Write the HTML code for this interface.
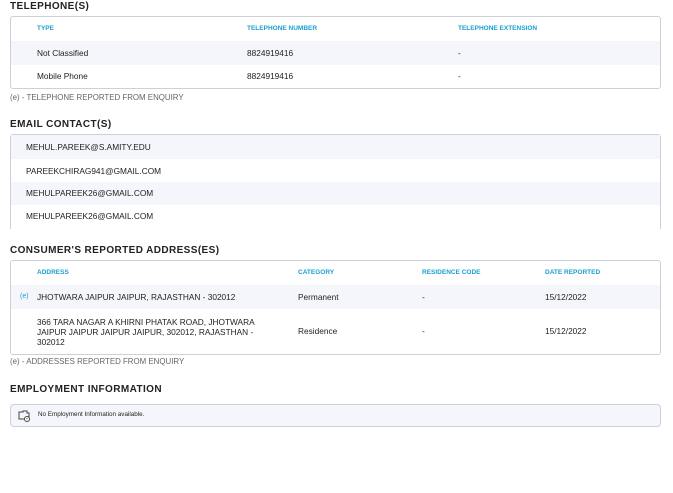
<!DOCTYPE html><html><head><style>
body{margin:0;width:673px;height:493px;background:#fff;font-family:"Liberation Sans",sans-serif;color:#222;position:relative;overflow:hidden}
.a{position:absolute;white-space:nowrap}
.t{font-size:10px;font-weight:bold;letter-spacing:.4px;color:#222}
.box{position:absolute;left:10px;width:649px;border:1px solid #cfd0d6;border-radius:3px}
.h{font-size:6.5px;font-weight:bold;color:#1aa0d0}
.c{font-size:8.3px;color:#222}
.sh{position:absolute;left:0;right:0;background:#f5f6fb}
.n{font-size:7.9px;color:#666}
</style></head><body>
<div class="a t" style="left:10px;top:1px">TELEPHONE(S)</div>
<div class="box" style="top:16px;height:71px">
<div class="sh" style="top:24px;height:24px"></div>
<div class="a h" style="left:26px;top:8px">TYPE</div>
<div class="a h" style="left:236px;top:8px">TELEPHONE NUMBER</div>
<div class="a h" style="left:447px;top:8px">TELEPHONE EXTENSION</div>
<div class="a c" style="left:26px;top:31px">Not Classified</div>
<div class="a c" style="left:236px;top:31px">8824919416</div>
<div class="a c" style="left:447px;top:31px">-</div>
<div class="a c" style="left:26px;top:54px">Mobile Phone</div>
<div class="a c" style="left:236px;top:54px">8824919416</div>
<div class="a c" style="left:447px;top:54px">-</div>
</div>
<div class="a n" style="left:10px;top:93px">(e) - TELEPHONE REPORTED FROM ENQUIRY</div>

<div class="a t" style="left:10px;top:119px">EMAIL CONTACT(S)</div>
<div class="box" style="top:134px;height:94px;border-bottom:none;border-radius:3px 3px 0 0">
<div class="sh" style="top:0;height:24px"></div>
<div class="sh" style="top:47px;height:23px"></div>
<div class="a c" style="left:15px;top:7px">MEHUL.PAREEK@S.AMITY.EDU</div>
<div class="a c" style="left:15px;top:31px">PAREEKCHIRAG941@GMAIL.COM</div>
<div class="a c" style="left:15px;top:53px">MEHULPAREEK26@GMAIL.COM</div>
<div class="a c" style="left:15px;top:76px">MEHULPAREEK26@GMAIL.COM</div>
</div>

<div class="a t" style="left:10px;top:245px">CONSUMER'S REPORTED ADDRESS(ES)</div>
<div class="box" style="top:260px;height:93px">
<div class="sh" style="top:24px;height:24px"></div>
<div class="a h" style="left:26px;top:8px">ADDRESS</div>
<div class="a h" style="left:287px;top:8px">CATEGORY</div>
<div class="a h" style="left:411px;top:8px">RESIDENCE CODE</div>
<div class="a h" style="left:534px;top:8px">DATE REPORTED</div>
<div class="a" style="left:9px;top:32px;font-size:7px;color:#1aa0d0">(e)</div>
<div class="a c" style="left:26px;top:31px">JHOTWARA JAIPUR JAIPUR, RAJASTHAN - 302012</div>
<div class="a c" style="left:287px;top:31px">Permanent</div>
<div class="a c" style="left:411px;top:31px">-</div>
<div class="a c" style="left:534px;top:31px">15/12/2022</div>
<div class="a c" style="left:26px;top:56px;line-height:10px">366 TARA NAGAR A KHIRNI PHATAK ROAD, JHOTWARA<br>JAIPUR JAIPUR JAIPUR JAIPUR, 302012, RAJASTHAN -<br>302012</div>
<div class="a c" style="left:287px;top:65px">Residence</div>
<div class="a c" style="left:411px;top:65px">-</div>
<div class="a c" style="left:534px;top:65px">15/12/2022</div>
</div>
<div class="a n" style="left:10px;top:357px">(e) - ADDRESSES REPORTED FROM ENQUIRY</div>

<div class="a t" style="left:10px;top:384px">EMPLOYMENT INFORMATION</div>
<div class="box" style="top:404px;height:21px;background:#f5f6fb;border-radius:4px">
<svg class="a" style="left:6px;top:4px" width="14" height="13" viewBox="0 0 14 13" fill="none" stroke="#444" stroke-width="1"><path d="M2 3h4v-1h4v2h2v6H2z"/><circle cx="10" cy="10" r="2.5" fill="#fff"/><path d="M10 9v1.3"/></svg>
<div class="a" style="left:27px;top:6px;font-size:6.3px;color:#222">No Employment Information available.</div>
</div>
</body></html>
